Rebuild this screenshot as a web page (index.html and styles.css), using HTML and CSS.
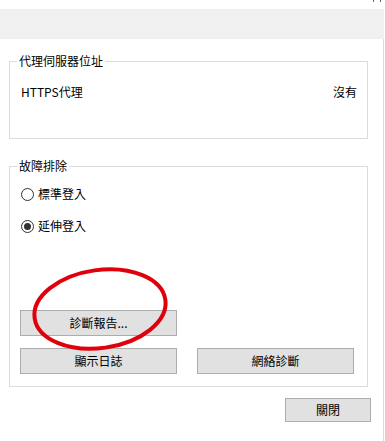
FILE: index.html
```html
<!DOCTYPE html>
<html lang="zh-Hant">
<head>
<meta charset="utf-8">
<title>代理伺服器</title>
<link rel="stylesheet" href="styles.css">
</head>
<body>
<div class="window">
  <div class="topstrip"><span class="ctl"></span></div>
  <div class="header"></div>
  <div class="content">
    <fieldset class="group group-proxy">
      <legend>代理伺服器位址</legend>
      <div class="row">
        <span>HTTPS代理</span>
        <span>沒有</span>
      </div>
    </fieldset>
    <fieldset class="group group-trouble">
      <legend>故障排除</legend>
      <label class="radio"><input type="radio" name="login"><span>標準登入</span></label>
      <label class="radio radio-2"><input type="radio" name="login" checked><span>延伸登入</span></label>
      <div class="btn-row btn-row-1">
        <button class="btn">診斷報告...</button>
      </div>
      <div class="btn-row btn-row-2">
        <button class="btn">顯示日誌</button>
        <button class="btn">網絡診斷</button>
      </div>
      <svg class="mark" width="150" height="100" viewBox="0 0 150 100">
        <ellipse cx="75" cy="50" rx="66" ry="39" transform="rotate(-8 75 50)" fill="none" stroke="#e0000c" stroke-width="4"/>
      </svg>
    </fieldset>
    <div class="footer">
      <button class="btn btn-close">關閉</button>
    </div>
  </div>
</div>
</body>
</html>
```

FILE: styles.css
```css
html, body {
  margin: 0;
  padding: 0;
  background: #ffffff;
}
body {
  font-family: "Noto Sans CJK TC", "Noto Sans", sans-serif;
  font-size: 12px;
  color: #000;
  width: 385px;
  height: 441px;
  overflow: hidden;
}
.window {
  width: 383px;
  height: 441px;
  border-right: 1px solid #dcdcdc;
  box-sizing: content-box;
}
.topstrip {
  height: 9px;
  display: flex;
  justify-content: flex-end;
  padding-right: 3px;
  background: #fff;
  margin-right: -1px;
}
.ctl {
  width: 6px;
  height: 2px;
  border-left: 1px solid #666;
  border-right: 1px solid #666;
}
.header {
  height: 30px;
  background: #f0f0f0;
  margin-right: -1px;
}
.content {
  padding: 15px 0 0 9px;
  position: relative;
}
.group {
  width: 359px;
  box-sizing: border-box;
  margin: 0;
  padding: 0 10px 0 11px;
  border: 1px solid #dcdcdc;
  min-inline-size: 0;
  position: relative;
}
.group legend {
  margin-left: -4px;
  padding: 0 2px;
  line-height: 14px;
  height: 14px;
}
.group-proxy {
  padding-top: 16px;
  padding-bottom: 38px;
}
.row {
  display: flex;
  justify-content: space-between;
  line-height: 16px;
  height: 16px;
}
.group-trouble {
  margin-top: 20px;
  padding-top: 13px;
  padding-bottom: 12px;
}
.radio {
  display: flex;
  align-items: center;
  height: 16px;
  line-height: 16px;
  gap: 4px;
}
.radio-2 {
  margin-top: 16px;
}
.radio input {
  appearance: none;
  -webkit-appearance: none;
  margin: 0;
  width: 13px;
  height: 13px;
  border: 1px solid #333;
  border-radius: 50%;
  box-sizing: border-box;
  display: flex;
  align-items: center;
  justify-content: center;
  background: #fff;
}
.radio input:checked::after {
  content: "";
  width: 7px;
  height: 7px;
  border-radius: 50%;
  background: #333;
}
.btn-row {
  display: flex;
  gap: 20px;
  margin-left: -1px;
}
.btn-row-1 {
  margin-top: 76px;
}
.btn-row-2 {
  margin-top: 12px;
}
.btn {
  width: 157px;
  height: 26px;
  box-sizing: border-box;
  background: #e1e1e1;
  border: 1px solid #adadad;
  border-radius: 0;
  font-family: "Noto Sans CJK TC", "Noto Sans", sans-serif;
  font-size: 12px;
  color: #000;
  padding: 0;
  line-height: 24px;
}
.mark {
  position: absolute;
  left: 15px;
  top: 86px;
}
.footer {
  display: flex;
  justify-content: flex-end;
  padding-right: 12px;
  margin-top: 11px;
}
.btn-close {
  width: 86px;
  height: 24px;
  line-height: 22px;
}
```
